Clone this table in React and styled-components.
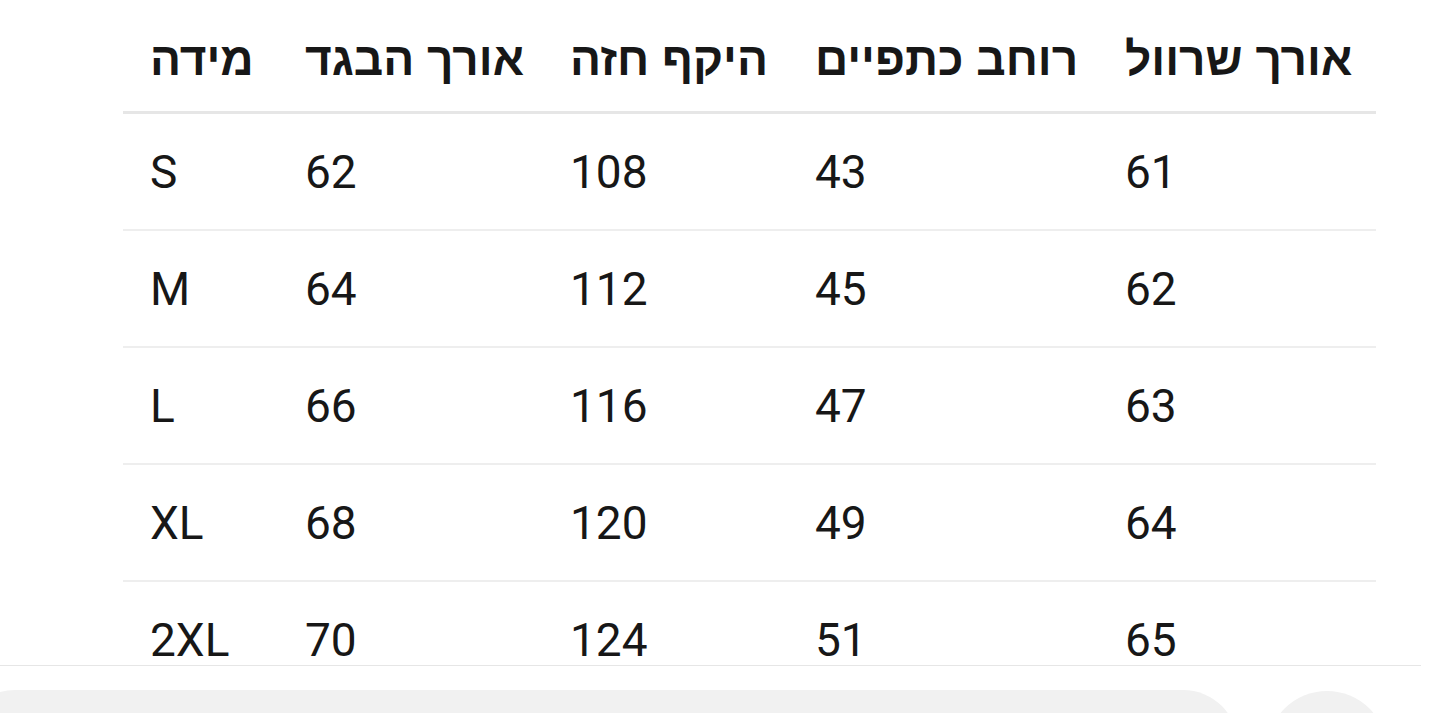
import React from 'react'
import styled, { createGlobalStyle } from 'styled-components'

const columns = ['מידה', 'אורך הבגד', 'היקף חזה', 'רוחב כתפיים', 'אורך שרוול']

const sizes = [
  ['S', '62', '108', '43', '61'],
  ['M', '64', '112', '45', '62'],
  ['L', '66', '116', '47', '63'],
  ['XL', '68', '120', '49', '64'],
  ['2XL', '70', '124', '51', '65'],
]

const App = () =>
  <React.Fragment>
    <GlobalStyle />
    <Page>
      <ScrollArea>
        <Table>
          <HeadRow>
            {columns.map((label, i) =>
              <HeadCell key={`head-${i}`}>{label}</HeadCell>
            )}
          </HeadRow>
          {sizes.map((row) =>
            <Row key={row[0]}>
              {row.map((value, i) =>
                <Cell key={`${row[0]}-${i}`}>{value}</Cell>
              )}
            </Row>
          )}
        </Table>
      </ScrollArea>
      <Footer>
        <InputPill />
        <RoundButton />
      </Footer>
    </Page>
  </React.Fragment>

export default App

// STYLES
const GlobalStyle = createGlobalStyle`
  html, body {
    margin: 0;
    padding: 0;
    background: #ffffff;
    overflow: hidden;
  }
  body {
    font-family: Roboto, "Liberation Sans", sans-serif;
    color: #171717;
  }
`

const Page = styled.div`
  display: flex;
  flex-direction: column;
  width: 1435px;
  height: 713px;
  overflow: hidden;
`

const ScrollArea = styled.div`
  height: 665px;
  flex: none;
  overflow: hidden;
  padding-left: 123px;
  box-sizing: border-box;
`

const Table = styled.div`
  width: 1253px;
  display: flex;
  flex-direction: column;
`

const gridCols = `
  display: grid;
  grid-template-columns: 155px 265px 245px 310px 278px;
  align-items: center;
`

const HeadRow = styled.div`
  ${gridCols};
  height: 111px;
  border-bottom: 3px solid #e6e6e6;
`

const Row = styled.div`
  ${gridCols};
  height: 115px;
  flex: none;
  border-bottom: 2px solid #eeeeee;
`

const HeadCell = styled.div`
  padding-left: 27px;
  font-family: "Liberation Sans", Arial, sans-serif;
  font-size: 46px;
  font-weight: 700;
  white-space: nowrap;
  text-align: left;
  line-height: 1;
  margin-top: 6px;
`

const Cell = styled.div`
  padding-left: 27px;
  font-size: 46px;
  font-weight: 400;
  line-height: 1;
  white-space: nowrap;
`

const Footer = styled.div`
  flex: none;
  display: flex;
  align-items: flex-start;
  gap: 29px;
  width: 1421px;
  height: 48px;
  padding-top: 24px;
  box-sizing: border-box;
  border-top: 1px solid #e6e6e6;
`

const InputPill = styled.div`
  flex: none;
  width: 1278px;
  height: 110px;
  margin-left: -40px;
  border-radius: 55px;
  background: #f1f1f1;
`

const RoundButton = styled.div`
  flex: none;
  width: 120px;
  height: 120px;
  border-radius: 50%;
  background: #f1f1f1;
  margin-top: 1px;
`
